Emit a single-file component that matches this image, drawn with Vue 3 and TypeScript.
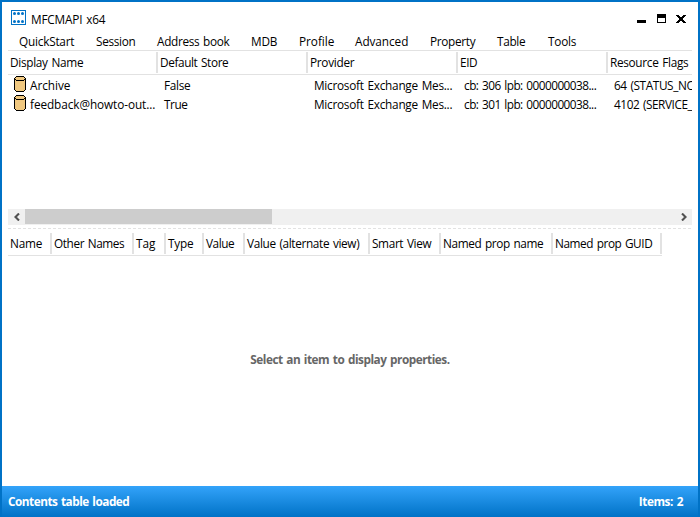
<script setup lang="ts">
import type { Directive } from 'vue'

interface Label { text: string; width: number }
interface Column extends Label { size: number }

const menu: Column[] = [
  { text: 'QuickStart', width: 55, size: 77 },
  { text: 'Session', width: 39, size: 61 },
  { text: 'Address book', width: 72, size: 94 },
  { text: 'MDB', width: 26, size: 48 },
  { text: 'Profile', width: 35, size: 56 },
  { text: 'Advanced', width: 53, size: 75 },
  { text: 'Property', width: 45, size: 67 },
  { text: 'Table', width: 28, size: 51 },
  { text: 'Tools', width: 28, size: 50 },
]

const stores: Column[] = [
  { text: 'Display Name', width: 73, size: 150 },
  { text: 'Default Store', width: 68, size: 150 },
  { text: 'Provider', width: 44, size: 150 },
  { text: 'EID', width: 17, size: 150 },
  { text: 'Resource Flags', width: 78, size: 150 },
]

const rows: Label[][] = [
  [
    { text: 'Archive', width: 40 },
    { text: 'False', width: 26 },
    { text: 'Microsoft Exchange Mes...', width: 138 },
    { text: 'cb: 306 lpb: 0000000038...', width: 132 },
    { text: '64 (STATUS_NO', width: 81 },
  ],
  [
    { text: 'feedback@howto-out...', width: 125 },
    { text: 'True', width: 23 },
    { text: 'Microsoft Exchange Mes...', width: 138 },
    { text: 'cb: 301 lpb: 0000000038...', width: 132 },
    { text: '4102 (SERVICE_', width: 78 },
  ],
]

const properties: Column[] = [
  { text: 'Name', width: 32, size: 44 },
  { text: 'Other Names', width: 70, size: 82 },
  { text: 'Tag', width: 19, size: 32 },
  { text: 'Type', width: 25, size: 38 },
  { text: 'Value', width: 28, size: 41 },
  { text: 'Value (alternate view)', width: 112, size: 125 },
  { text: 'Smart View', width: 59, size: 71 },
  { text: 'Named prop name', width: 100, size: 112 },
  { text: 'Named prop GUID', width: 97, size: 109 },
]

// Tracks each label so that it occupies its nominal width.
const vFit: Directive<HTMLElement, number> = {
  mounted(el, { value }) {
    const natural = el.getBoundingClientRect().width
    const count = el.textContent?.length ?? 1
    el.style.letterSpacing = `${(value + 0.3 - natural) / count}px`
  },
}
</script>

<template>
  <div class="window">
    <header class="titlebar">
      <svg class="app-icon" width="15" height="15" viewBox="0 0 15 15">
        <rect x=".5" y=".5" width="14" height="14" fill="#fff" stroke="#0072c6" />
        <g fill="#0072c6">
          <circle cx="3.5" cy="3.5" r="1.5" /><circle cx="7.5" cy="3.5" r="1.5" /><circle cx="11.5" cy="3.5" r="1.5" />
          <circle cx="3.5" cy="11.5" r="1.5" /><circle cx="7.5" cy="11.5" r="1.5" /><circle cx="11.5" cy="11.5" r="1.5" />
        </g>
      </svg>
      <span class="title"><span v-fit="74">MFCMAPI x64</span></span>
      <svg class="controls" width="49" height="9" viewBox="0 0 49 9" shape-rendering="crispEdges">
        <path d="M0 6h9v3H0z" />
        <path fill-rule="evenodd" d="M20 0h9v9h-9zM21 4v4h7V4z" />
        <path d="M39 1h3v1h1v1h2V2h1V1h3v1h-1v1h-1v1h-1v2h1v1h1v1h1v1h-3V8h-1V7h-2v1h-1v1h-3V8h1V7h1V6h1V4h-1V3h-1V2h-1z" />
      </svg>
    </header>

    <nav class="menu">
      <div v-for="item in menu" :key="item.text" class="menu-item" :style="{ width: item.size + 'px' }">
        <span v-fit="item.width">{{ item.text }}</span>
      </div>
    </nav>

    <section class="list">
      <div class="heads">
        <div v-for="col in stores" :key="col.text" class="head" :style="{ width: col.size + 'px' }">
          <span v-fit="col.width">{{ col.text }}</span>
        </div>
      </div>
      <div v-for="(row, r) in rows" :key="r" class="row">
        <div v-for="(cell, c) in row" :key="c" class="cell">
          <svg v-if="c === 0" class="store" width="12" height="16" viewBox="0 0 12 16" shape-rendering="crispEdges">
            <path fill="#f0c880" d="M2 1h8v1h1v12h-1v1H2v-1H1V2h1z" />
            <path d="M2 0h8v1H2zM1 1h1v1H1zM10 1h1v1h-1zM0 2h1v12H0zM11 2h1v12h-1zM1 14h1v1H1zM10 14h1v1h-1zM2 15h8v1H2zM1 3h1v1H1zM10 3h1v1h-1zM2 4h8v1H2z" />
          </svg>
          <span v-fit="cell.width">{{ cell.text }}</span>
        </div>
      </div>
    </section>

    <div class="scrollbar">
      <div class="arrow">
        <svg width="6" height="8" viewBox="0 0 6 8"><path d="M5 .5 1.5 4 5 7.5" /></svg>
      </div>
      <div class="thumb"></div>
      <div class="arrow end">
        <svg width="6" height="8" viewBox="0 0 6 8"><path d="M1 .5 4.5 4 1 7.5" /></svg>
      </div>
    </div>
    <div class="splitter"></div>

    <section class="details">
      <div class="heads fitted">
        <div v-for="col in properties" :key="col.text" class="head" :style="{ width: col.size + 'px' }">
          <span v-fit="col.width">{{ col.text }}</span>
        </div>
      </div>
      <p class="empty"><span v-fit="199">Select an item to display properties.</span></p>
    </section>

    <footer class="status">
      <span v-fit="121">Contents table loaded</span>
      <span v-fit="44">Items: 2</span>
    </footer>
  </div>
</template>

<style>
body {
  margin: 0;
  background: #fff;
}
</style>

<style scoped>
.window {
  box-sizing: border-box;
  display: flex;
  flex-direction: column;
  width: 700px;
  height: 517px;
  overflow: hidden;
  border: 2px solid #0072c6;
  border-bottom: 0;
  background: #fff;
  color: #000;
  font: 11.8px/18px "Open Sans", "Noto Sans", sans-serif;
  word-spacing: 1px;
  white-space: nowrap;
}
.titlebar {
  display: flex;
  height: 30px;
  padding: 0 12px 0 9px;
}
.app-icon {
  margin-top: 8px;
}
.title {
  flex: 1;
  padding: 8px 0 0 5px;
}
.controls {
  margin-top: 12px;
}
.menu {
  display: flex;
  height: 18px;
  padding-left: 17px;
}
.menu-item {
  flex: none;
}
.list {
  height: 159px;
  margin: 0 6px;
  overflow: hidden;
}
.heads {
  box-sizing: border-box;
  display: flex;
  height: 25px;
  padding: 1px 0;
  border-top: 1px solid #e2e2e2;
  border-bottom: 1px solid #e2e2e2;
}
.head {
  box-sizing: border-box;
  flex: none;
  height: 21px;
  padding: 1px 0 0 2px;
  border-right: 2px solid #e2e2e2;
}
.row {
  display: flex;
  height: 19px;
}
.cell {
  display: flex;
  flex: none;
  box-sizing: border-box;
  width: 150px;
  padding: 1px 0 0 6px;
}
.store {
  flex: none;
  margin-right: 4px;
}
.scrollbar {
  display: flex;
  height: 16px;
  margin: 0 6px;
  background: #f0f0f0;
}
.arrow {
  display: flex;
  align-items: center;
  justify-content: center;
  width: 17px;
  height: 15px;
}
.arrow path {
  fill: none;
  stroke: #505050;
  stroke-width: 2.1;
}
.thumb {
  width: 247px;
  height: 15px;
  background: #cdcdcd;
}
.end {
  margin-left: auto;
}
.splitter {
  height: 1px;
  margin: 3px 6px;
  background: repeating-linear-gradient(90deg, #e2e2e2 0 3px, #fff 3px 5px);
}
.details {
  flex: 1;
  padding: 0 6px;
}
.fitted {
  width: 654px;
  height: 24px;
  border-top: 0;
}
.empty {
  margin: 94px 0 0;
  text-align: center;
  color: #666;
  font-weight: 700;
}
.status {
  display: flex;
  justify-content: space-between;
  height: 31px;
  margin: 0;
  padding: 0 15px 0 6px;
  background: linear-gradient(#33a3fa, #0072c6);
  color: #fff;
  font-weight: 700;
  line-height: 31px;
}
</style>
